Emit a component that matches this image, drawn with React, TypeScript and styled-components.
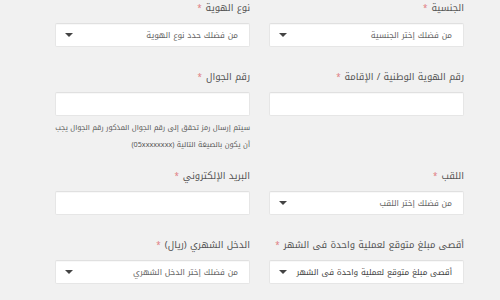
import styled, { createGlobalStyle } from "styled-components";

const GlobalStyle = createGlobalStyle`
  html, body {
    margin: 0;
    padding: 0;
    background: #f1f1f1;
  }
  body {
    font-family: "Noto Kufi Arabic", "DejaVu Sans", sans-serif;
  }
`;

const Page = styled.div`
  direction: rtl;
  width: 500px;
  height: 300px;
  overflow: hidden;
  background: #f1f1f1;
`;

const Form = styled.form`
  display: grid;
  grid-template-columns: 195px 195px;
  column-gap: 19px;
  row-gap: 22px;
  align-items: start;
  justify-content: start;
  padding: 0 36px 0 0;
`;

const Field = styled.div`
  display: flex;
  flex-direction: column;
`;

const Label = styled.label`
  font-size: 9.5px;
  line-height: 16px;
  color: #555;
  margin: 0 0 6px -2px;
  white-space: nowrap;
`;

const Star = styled.span`
  color: #e07a80;
  font-size: 8px;
  margin-right: 4px;
`;

const Box = styled.div`
  box-sizing: border-box;
  height: 24px;
  background: #fff;
  border: 1px solid #e6e6e6;
  border-top-color: #e0e0e0;
  border-radius: 2px;
  box-shadow: inset 0 1px 1px rgba(0, 0, 0, 0.03);
`;

const Select = styled(Box)<{ $filled?: boolean }>`
  display: flex;
  align-items: center;
  justify-content: space-between;
  padding: 0 11px 0 9px;
  font-size: 8.2px;
  line-height: 12px;
  color: ${({ $filled }) => ($filled ? "#444" : "#666")};
`;

const Caret = styled.span`
  width: 0;
  height: 0;
  border-left: 4px solid transparent;
  border-right: 4px solid transparent;
  border-top: 4px solid #444;
`;

const Help = styled.p`
  font-size: 7.2px;
  line-height: 17px;
  color: #555;
  margin: 3px 0 -7px 0;
`;

function Required({ children }: { children: string }) {
  return (
    <Label>
      {children}
      <Star>*</Star>
    </Label>
  );
}

function SelectField({
  label,
  value,
  filled,
}: {
  label: string;
  value: string;
  filled?: boolean;
}) {
  return (
    <Field>
      <Required>{label}</Required>
      <Select $filled={filled}>
        <span>{value}</span>
        <Caret />
      </Select>
    </Field>
  );
}

export default function App() {
  return (
    <Page>
      <GlobalStyle />
      <Form>
        <SelectField label="الجنسية" value="من فضلك إختر الجنسية" />
        <SelectField label="نوع الهوية" value="من فضلك حدد نوع الهوية" />

        <Field>
          <Required>رقم الهوية الوطنية / الإقامة</Required>
          <Box />
        </Field>
        <Field>
          <Required>رقم الجوال</Required>
          <Box />
          <Help>
            سيتم إرسال رمز تحقق إلى رقم الجوال المذكور رقم الجوال يجب أن يكون
            بالصيغة التالية (05xxxxxxxx)
          </Help>
        </Field>

        <SelectField label="اللقب" value="من فضلك إختر اللقب" />
        <Field>
          <Required>البريد الإلكتروني</Required>
          <Box />
        </Field>

        <SelectField
          label="أقصى مبلغ متوقع لعملية واحدة فى الشهر"
          value="أقصى مبلغ متوقع لعملية واحدة فى الشهر"
          filled
        />
        <SelectField
          label="الدخل الشهري (ريال)"
          value="من فضلك إختر الدخل الشهري"
        />
      </Form>
    </Page>
  );
}
